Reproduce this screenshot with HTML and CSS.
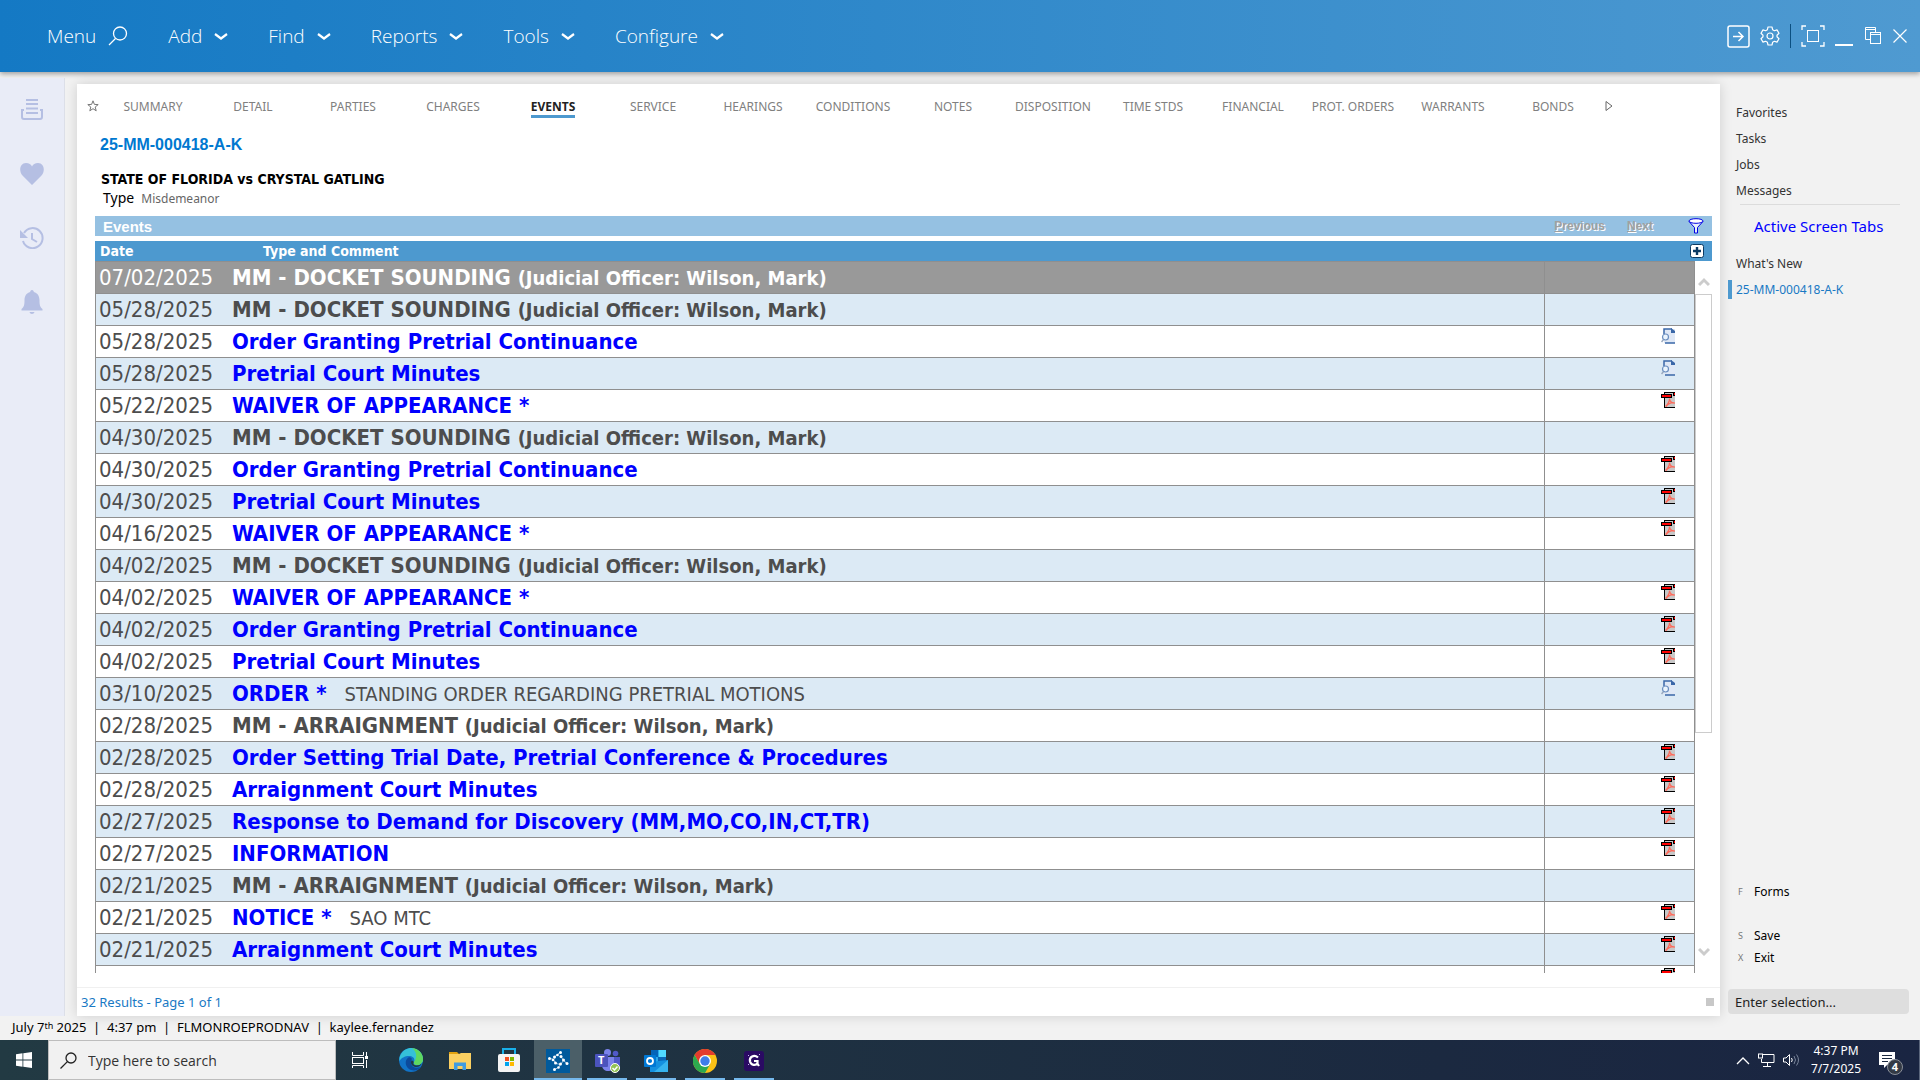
FILE: index.html
```html
<!DOCTYPE html>
<html lang="en">
  <head>
    <meta charset="UTF-8" />
    <meta name="viewport" content="width=device-width, initial-scale=1.0" />
    <title>25-MM-000418-A-K - Events</title>
    <link rel="stylesheet" href="styles.css" />
  </head>
  <body>
    <svg class="sprite" aria-hidden="true">
      <symbol id="chevron" viewBox="0 0 14 14">
        <path d="M1 5l6 4.500L13 5" fill="none" stroke="#fff" stroke-width="2.200" />
      </symbol>
      <symbol id="pdf" viewBox="0 0 14 16">
        <path d="M3 0h11v16H3z" fill="#000" />
        <path d="M4 1h10v14H4z" fill="#c8c8c8" />
        <path d="M12 0h2v4h-2z" fill="#000" />
        <path d="M13 1h1v2h-1z" fill="#f00" />
        <path d="M0 2h11v4H0z" fill="#000" />
        <path d="M1 3h9v2H1z" fill="#f00" />
        <path d="M4.500 14.500c2-2 4-5 4-8 .2 3 2.500 5 5.500 4.500-3-.8-6.500.5-9 3.500" fill="none" stroke="#ff6a5a" stroke-width="1.200" />
      </symbol>
      <symbol id="doc" viewBox="0 0 14 16">
        <path d="M3 1h11v14H3z" fill="#dfe8f6" />
        <path d="M3 6V1h8M4 15h10" fill="none" stroke="#3a67a8" stroke-width="1.500" />
        <path d="M10 0l4 3v2h-4z" fill="#3a67a8" />
        <path d="M2.500 11.500L.5 14" stroke="#9aa9c0" stroke-width="1.500" />
        <circle cx="4.500" cy="9" r="3" fill="#eaf4fd" stroke="#6c8fc0" stroke-width="1.200" />
      </symbol>
    </svg>

    <header class="topbar">
      <nav class="menu">
        <button>Menu
          <svg width="20" height="20" viewBox="0 0 20 20"><circle cx="12" cy="7.500" r="6.500" fill="none" stroke="#fff" stroke-width="1.300" /><path d="M7.500 12.500L1 19" stroke="#fff" stroke-width="1.300" /></svg>
        </button>
        <button>Add <svg width="14" height="14"><use href="#chevron" /></svg></button>
        <button>Find <svg width="14" height="14"><use href="#chevron" /></svg></button>
        <button>Reports <svg width="14" height="14"><use href="#chevron" /></svg></button>
        <button>Tools <svg width="14" height="14"><use href="#chevron" /></svg></button>
        <button>Configure <svg width="14" height="14"><use href="#chevron" /></svg></button>
      </nav>
      <div class="window-tools">
        <button aria-label="Sign out">
          <svg width="23" height="23" viewBox="0 0 23 23" fill="none" stroke="#fff"><rect x="1" y="1" width="21" height="21" rx="2" stroke-width="1.500" /><path d="M6 11.500h10M11.500 7l4.500 4.500-4.500 4.500" stroke-width="1.500" /></svg>
        </button>
        <button aria-label="Settings">
          <svg width="20" height="20" viewBox="0 0 20 20" fill="none" stroke="#fff" stroke-width="1.200" stroke-linejoin="round"><circle cx="10" cy="10" r="3" /><path d="M8 1h4l.6 2.700 1.800 1 2.600-.8 2 3.400-2 1.900v1.600l2 1.900-2 3.400-2.600-.8-1.800 1L12 19H8l-.6-2.700-1.800-1-2.600.8-2-3.400 2-1.900V9.200L1 7.300l2-3.400 2.600.8 1.800-1z" /></svg>
        </button>
        <span class="tool-divider"></span>
        <button aria-label="Full screen">
          <svg width="24" height="22" viewBox="0 0 24 22" fill="none" stroke="#fff"><path d="M1 5V1h4M19 1h4v4M23 17v4h-4M5 21H1v-4" stroke-width="1.300" /><rect x="6.500" y="5.500" width="11" height="11" /></svg>
        </button>
        <button aria-label="Minimize">
          <svg width="18" height="20" viewBox="0 0 18 20"><path d="M0 18h18v2H0z" fill="#fff" /></svg>
        </button>
        <button class="restore" aria-label="Restore">
          <svg width="16" height="18" viewBox="0 0 16 18" fill="none" stroke="#fff"><path d="M5 12.500H.5v-12h10v5M.5 2.500h10" /><rect x="5.500" y="5.500" width="10" height="11" /><path d="M5.500 7.500h10" /></svg>
        </button>
        <button aria-label="Close">
          <svg width="14" height="14" viewBox="0 0 14 14"><path d="M.5.5l13 13M13.500.5l-13 13" stroke="#fff" stroke-width="1.200" /></svg>
        </button>
      </div>
    </header>

    <div class="workspace">
      <aside class="rail">
        <button aria-label="Queue">
          <svg width="22" height="22" viewBox="0 0 22 22" fill="none" stroke="#b5bfe3" stroke-width="2"><path d="M5 1h12M5 5h12M5 9.500h12M5 14h12" /><path d="M3 11H1v7q0 2 2 2h16q2 0 2-2v-7h-2" /></svg>
        </button>
        <button aria-label="Favorites">
          <svg width="24" height="22" viewBox="0 0 24 22" fill="#b5bfe3"><path d="M12 22L2.500 12.500C-1.500 8-.2 0 6 0c3 0 5 1.500 6 3.500C13 1.500 15 0 18 0c6.200 0 7.500 8 3.500 12.500z" /></svg>
        </button>
        <button aria-label="History">
          <svg width="24" height="22" viewBox="0 0 24 22" fill="none" stroke="#b5bfe3" stroke-width="2"><path d="M4 6a10 10 0 1 1-1 8" /><path d="M0 3v8h8z" fill="#b5bfe3" stroke="none" /><path d="M12 6v6l5 3" /></svg>
        </button>
        <button aria-label="Notifications">
          <svg width="22" height="24" viewBox="0 0 22 24" fill="#b5bfe3"><path d="M11 0c1.300 0 1.800 1 1.800 2 4 1 5.700 4.500 5.700 8 0 5 .5 7 3 9v1.500H.5V19c2.500-2 3-4 3-9 0-3.500 1.700-7 5.700-8 0-1 .5-2 1.800-2zM8.500 22h5c-.5 2.500-4.500 2.500-5 0z" /></svg>
        </button>
      </aside>

      <main class="panel">
        <nav class="tabs">
          <svg class="star" width="12" height="12" viewBox="0 0 12 12"><path d="M6 .8l1.400 3.600 3.800.2-3 2.400 1 3.800L6 8.700l-3.200 2.100 1-3.800-3-2.400 3.800-.2z" fill="none" stroke="#777" /></svg>
          <a href="#">SUMMARY</a>
          <a href="#">DETAIL</a>
          <a href="#">PARTIES</a>
          <a href="#">CHARGES</a>
          <a href="#" class="active"><span>EVENTS</span></a>
          <a href="#">SERVICE</a>
          <a href="#">HEARINGS</a>
          <a href="#">CONDITIONS</a>
          <a href="#">NOTES</a>
          <a href="#">DISPOSITION</a>
          <a href="#">TIME STDS</a>
          <a href="#">FINANCIAL</a>
          <a href="#">PROT. ORDERS</a>
          <a href="#">WARRANTS</a>
          <a href="#">BONDS</a>
          <button aria-label="More tabs"><svg width="8" height="12" viewBox="0 0 8 12"><path d="M1 1.500v9L7 6z" fill="none" stroke="#666" /></svg></button>
        </nav>

        <section class="case">
          <h1>25-MM-000418-A-K</h1>
          <h2>STATE OF FLORIDA vs CRYSTAL GATLING</h2>
          <p><span>Type</span> Misdemeanor</p>
        </section>

        <section class="events">
          <div class="events-bar">
            <h3>Events</h3>
            <button class="page-btn" disabled><u>P</u>revious</button>
            <button class="page-btn" disabled><u>N</u>ext</button>
            <button aria-label="Filter">
              <svg width="16" height="16" viewBox="0 0 16 16" fill="none" stroke="#0000e6"><path d="M1 3.500l5.500 6V15h3V9.500l5.500-6" fill="#e8f1fa" /><ellipse cx="8" cy="3" rx="7" ry="2.300" fill="#fff" /></svg>
            </button>
          </div>
          <div class="grid">
            <table>
              <thead>
                <tr>
                  <th class="date">Date</th>
                  <th class="type">Type and Comment</th>
                  <th class="flag"></th>
                  <th class="add"><button aria-label="Add event"><svg width="14" height="14" viewBox="0 0 14 14"><rect x=".5" y=".5" width="13" height="13" rx="2" fill="#fff" stroke="#0b3a63" /><path d="M7 3v8M3 7h8" stroke="#0b3a63" stroke-width="2.400" /></svg></button></th>
                </tr>
              </thead>
              <tbody>
                <tr class="selected"><td>07/02/2025</td><td><b>MM - DOCKET SOUNDING <small>(Judicial Officer: Wilson, Mark)</small></b></td><td></td></tr>
                <tr><td>05/28/2025</td><td><b>MM - DOCKET SOUNDING <small>(Judicial Officer: Wilson, Mark)</small></b></td><td></td></tr>
                <tr><td>05/28/2025</td><td><a href="#">Order Granting Pretrial Continuance</a></td><td><svg><use href="#doc" /></svg></td></tr>
                <tr><td>05/28/2025</td><td><a href="#">Pretrial Court Minutes</a></td><td><svg><use href="#doc" /></svg></td></tr>
                <tr><td>05/22/2025</td><td><a href="#">WAIVER OF APPEARANCE *</a></td><td><svg><use href="#pdf" /></svg></td></tr>
                <tr><td>04/30/2025</td><td><b>MM - DOCKET SOUNDING <small>(Judicial Officer: Wilson, Mark)</small></b></td><td></td></tr>
                <tr><td>04/30/2025</td><td><a href="#">Order Granting Pretrial Continuance</a></td><td><svg><use href="#pdf" /></svg></td></tr>
                <tr><td>04/30/2025</td><td><a href="#">Pretrial Court Minutes</a></td><td><svg><use href="#pdf" /></svg></td></tr>
                <tr><td>04/16/2025</td><td><a href="#">WAIVER OF APPEARANCE *</a></td><td><svg><use href="#pdf" /></svg></td></tr>
                <tr><td>04/02/2025</td><td><b>MM - DOCKET SOUNDING <small>(Judicial Officer: Wilson, Mark)</small></b></td><td></td></tr>
                <tr><td>04/02/2025</td><td><a href="#">WAIVER OF APPEARANCE *</a></td><td><svg><use href="#pdf" /></svg></td></tr>
                <tr><td>04/02/2025</td><td><a href="#">Order Granting Pretrial Continuance</a></td><td><svg><use href="#pdf" /></svg></td></tr>
                <tr><td>04/02/2025</td><td><a href="#">Pretrial Court Minutes</a></td><td><svg><use href="#pdf" /></svg></td></tr>
                <tr><td>03/10/2025</td><td><a href="#">ORDER *</a><span class="comment">STANDING ORDER REGARDING PRETRIAL MOTIONS</span></td><td><svg><use href="#doc" /></svg></td></tr>
                <tr><td>02/28/2025</td><td><b>MM - ARRAIGNMENT <small>(Judicial Officer: Wilson, Mark)</small></b></td><td></td></tr>
                <tr><td>02/28/2025</td><td><a href="#">Order Setting Trial Date, Pretrial Conference &amp; Procedures</a></td><td><svg><use href="#pdf" /></svg></td></tr>
                <tr><td>02/28/2025</td><td><a href="#">Arraignment Court Minutes</a></td><td><svg><use href="#pdf" /></svg></td></tr>
                <tr><td>02/27/2025</td><td><a href="#">Response to Demand for Discovery (MM,MO,CO,IN,CT,TR)</a></td><td><svg><use href="#pdf" /></svg></td></tr>
                <tr><td>02/27/2025</td><td><a href="#">INFORMATION</a></td><td><svg><use href="#pdf" /></svg></td></tr>
                <tr><td>02/21/2025</td><td><b>MM - ARRAIGNMENT <small>(Judicial Officer: Wilson, Mark)</small></b></td><td></td></tr>
                <tr><td>02/21/2025</td><td><a href="#">NOTICE *</a><span class="comment">SAO MTC</span></td><td><svg><use href="#pdf" /></svg></td></tr>
                <tr><td>02/21/2025</td><td><a href="#">Arraignment Court Minutes</a></td><td><svg><use href="#pdf" /></svg></td></tr>
                <tr><td></td><td></td><td><svg><use href="#pdf" /></svg></td></tr>
              </tbody>
            </table>
            <div class="scrollbar">
              <svg width="12" height="10" viewBox="0 0 12 10"><path d="M1 8l5-5 5 5" fill="none" stroke="#ccc" stroke-width="3" /></svg>
              <div class="track"><div class="thumb"></div></div>
              <svg width="12" height="10" viewBox="0 0 12 10"><path d="M1 2l5 5 5-5" fill="none" stroke="#ccc" stroke-width="3" /></svg>
            </div>
          </div>
        </section>

        <footer class="results">
          <span>32 Results - Page 1 of 1</span>
          <i class="grip"></i>
        </footer>
      </main>

      <aside class="sidebar">
        <nav class="links">
          <a href="#">Favorites</a>
          <a href="#">Tasks</a>
          <a href="#">Jobs</a>
          <a href="#">Messages</a>
        </nav>
        <h4>Active Screen Tabs</h4>
        <nav class="links">
          <a href="#">What's New</a>
          <a href="#" class="current">25-MM-000418-A-K</a>
        </nav>
        <div class="actions">
          <button class="forms"><kbd>F</kbd>Forms</button>
          <button><kbd>S</kbd>Save</button>
          <button><kbd>X</kbd>Exit</button>
        </div>
        <input class="selection" type="text" placeholder="Enter selection..." aria-label="Enter selection" />
      </aside>
    </div>

    <div class="status">July 7<sup>th</sup> 2025 &nbsp;|&nbsp; 4:37 pm &nbsp;|&nbsp; FLMONROEPRODNAV &nbsp;|&nbsp; kaylee.fernandez</div>

    <footer class="taskbar">
      <button class="start" aria-label="Start">
        <svg width="16" height="16" viewBox="0 0 16 16" fill="#fff"><path d="M0 2.200l6.500-.9v6.300H0zM7.300 1.200L16 0v7.600H7.300zM0 8.400h6.500v6.300L0 13.800zM7.300 8.400H16V16l-8.700-1.200z" /></svg>
      </button>
      <label class="search">
        <svg width="17" height="17" viewBox="0 0 17 17" fill="none" stroke="#222" stroke-width="1.300"><circle cx="11" cy="6" r="5" /><path d="M7.400 9.600L.5 16.500" /></svg>
        <input type="text" placeholder="Type here to search" aria-label="Type here to search" />
      </label>
      <div class="apps">
        <button class="task-view" aria-label="Task view">
          <svg width="17" height="16" viewBox="0 0 17 16" fill="none" stroke="#fff"><path d="M.5 0v3.500h11V0M.5 16v-2.500h11V16M14.500 0v4M14.500 8v8" /><rect x=".5" y="5.500" width="11" height="6" /><path d="M13 4h3v3h-3z" fill="#fff" stroke="none" /></svg>
        </button>
        <button aria-label="Edge">
          <svg width="24" height="24" viewBox="0 0 24 24"><circle cx="12" cy="12" r="12" fill="#1173c7" /><path d="M1 8C4 1 10-.5 14 .2 20 1 24 6 24 11c0 4-3 6-6 6-3 0-4-1.500-3-3 1.500-3-1-6-5-6-4 0-8 2-9.500 5C.3 11 .4 9.500 1 8z" fill="#35c1d8" /><path d="M13 .1C20 .8 24 6 24 11c0 4-3 6-6 6-3 0-4-1.500-3-3 4-5 2-11-2-13.900z" fill="#5fd860" /><path d="M9.500 9.500C5 12 6 20 12 22c4 1.300 8-.5 10-3-5 2-10 0-10-4.500 0-1.500.5-3 1-3.500-1-1.500-2.500-2-3.500-1.500z" fill="#0c4a9b" /><path d="M12.500 12.500c2 0 2.500 1.500 2 2.500-.7 1.500 1 2.500 3 2.500 2.500 0 4-1 5-2-.5 3-4 4-7 3.200-2.500-.7-4.500-3.500-3-6.200z" fill="#223a43" /></svg>
        </button>
        <button aria-label="File Explorer">
          <svg width="22" height="19" viewBox="0 0 22 19"><path d="M0 1h8l2 2H0z" fill="#e2a20f" /><path d="M0 3h10l2-1h10v16H0z" fill="#fbd061" /><path d="M5 11.500h12V19h-3.500v-4h-5v4H5z" fill="#3f9be0" /></svg>
        </button>
        <button aria-label="Store">
          <svg width="24" height="24" viewBox="0 0 24 24"><path d="M6 7V1h12v6" fill="none" stroke="#19b0ea" stroke-width="2" /><rect x="1" y="6" width="22" height="18" rx="2" fill="#f4f4f4" /><path d="M8 9h4v4H8z" fill="#f25022" /><path d="M13 9h4v4h-4z" fill="#7fba00" /><path d="M8 14h4v4H8z" fill="#00a4ef" /><path d="M13 14h4v4h-4z" fill="#ffb900" /></svg>
        </button>
        <button class="running focused" aria-label="Case manager">
          <svg width="24" height="24" viewBox="0 0 24 24"><path d="M0 0h24v24H0z" fill="#005a9c" /><path d="M14 3.500l-5 4-1.500 3.500M3 9.500l4 .5 3 4.500 4.500 1 3-4-2.500-4M17.500 11.500l3.500 3M14.500 15.500l-2 3-4 2" fill="none" stroke="#9cc4e2" /><g fill="#fff"><circle cx="14.500" cy="3.500" r="1.500" /><circle cx="11.500" cy="6" r="1.300" /><circle cx="8.500" cy="8" r="1.500" /><circle cx="3.500" cy="9.500" r="1.500" /><circle cx="7" cy="11" r="1.300" /><circle cx="9.500" cy="14" r="1.500" /><circle cx="15" cy="7.500" r="1.500" /><circle cx="17.500" cy="11" r="1.500" /><circle cx="14.500" cy="15" r="1.500" /><circle cx="21" cy="14.500" r="1.500" /><circle cx="12.500" cy="18.500" r="1.300" /><circle cx="8.500" cy="20.500" r="1.500" /></g></svg>
        </button>
        <button class="running" aria-label="Teams">
          <svg width="25" height="24" viewBox="0 0 25 24"><circle cx="20.500" cy="4.500" r="2.800" fill="#5059c9" /><circle cx="12.500" cy="3.500" r="3.500" fill="#7b83eb" /><path d="M17 8h8v8c0 3-3 5-6 4z" fill="#5059c9" /><path d="M7 8h12v8c0 8-12 8-12 0z" fill="#7b83eb" /><rect y="5" width="13" height="13" rx="1" fill="#4b53bc" /><text x="3" y="15" class="glyph">T</text><circle cx="20" cy="19" r="4.500" fill="#92c353" stroke="#fff" /><path d="M17.500 19l2 2 3-3.500" fill="none" stroke="#fff" stroke-width="1.500" /></svg>
        </button>
        <button class="running" aria-label="Outlook">
          <svg width="24" height="22" viewBox="0 0 24 22"><path d="M7 0h15v14H7z" fill="#28a8ea" /><path d="M7 0h7v7H7z" fill="#0364b8" /><path d="M14 7h8v6h-8z" fill="#0a67b7" /><path d="M15 0h7v7h-7z" fill="#50d9ff" /><path d="M6 12l18-2v12H6z" fill="#1490df" /><path d="M24 10L10 22h14z" fill="#36b3ee" /><rect y="5" width="12" height="12" rx="1" fill="#0078d4" /><circle cx="6" cy="11" r="3" fill="none" stroke="#fff" stroke-width="1.800" /></svg>
        </button>
        <button class="running" aria-label="Chrome">
          <svg width="24" height="24" viewBox="0 0 24 24"><circle cx="12" cy="12" r="12" fill="#fbc116" /><path d="M12 6h10.400a12 12 0 0 0-20.800 0l5.200 9z" fill="#e33b2e" /><path d="M1.600 6a12 12 0 0 0 10.400 18l5.200-9H6.800z" fill="#2da94f" /><circle cx="12" cy="12" r="6" fill="#fff" /><circle cx="12" cy="12" r="4.700" fill="#3f7de8" /></svg>
        </button>
        <button class="running" aria-label="Assistant">
          <svg width="20" height="20" viewBox="0 0 20 20"><rect width="20" height="20" rx="3" fill="#2a0a63" /><path d="M14 6.500C10 3 5 6 6 10.500c1 4 6 4.500 7.500 1.500v-2H10M13 12l2 3" fill="none" stroke="#fff" stroke-width="2.200" /><path d="M4 4l1 1M4 14l1-1M15 4l1-1" stroke="#c9b6f0" /></svg>
        </button>
      </div>
      <div class="tray">
        <svg width="14" height="9" viewBox="0 0 14 9"><path d="M1 8l6-6 6 6" fill="none" stroke="#fff" stroke-width="1.300" /></svg>
        <svg width="17" height="14" viewBox="0 0 17 14" fill="none" stroke="#fff"><path d="M5 1.500h11v8H3.500V6M9.500 9.500v4M5 13.500h8" /><rect x=".5" y="1" width="4" height="4" /></svg>
        <svg width="17" height="14" viewBox="0 0 17 14" fill="none" stroke="#fff"><path d="M.5 5h2.500L6.500 1.500v11L3 9H.5z" /><path d="M8.500 5q1.500 2 0 4" /><path d="M11 3q3 4 0 8M13.500 1.500q4 5.500 0 11" stroke="#78849a" /></svg>
      </div>
      <div class="clock">4:37 PM<br />7/7/2025</div>
      <button class="notices" aria-label="Notifications">
        <svg width="16" height="17" viewBox="0 0 16 17"><path d="M0 0h16v13H8l-3 3v-3H0z" fill="#fff" /><path d="M3 3.500h10M3 6.500h10M3 9.500h6" stroke="#1b2940" /></svg>
        <span class="badge">4</span>
      </button>
    </footer>
  </body>
</html>
```
FILE: styles.css
```css
* {
  box-sizing: border-box;
}
body {
  margin: 0;
  height: 100vh;
  display: flex;
  flex-direction: column;
  overflow: hidden;
  background-color: #f2f2f2;
  color: #000;
  font-family: "Noto Sans", "Open Sans", sans-serif;
  font-size: 12px;
}
h1,
h2,
h3,
h4,
p {
  margin: 0;
}
a {
  text-decoration: none;
  color: inherit;
}
button {
  display: flex;
  align-items: center;
  padding: 0;
  border: 0;
  background: none;
  color: inherit;
  font: inherit;
}
.sprite {
  display: none;
}

/* top bar */
.topbar {
  flex: none;
  display: flex;
  align-items: center;
  justify-content: space-between;
  height: 72px;
  padding: 0 13px 0 47px;
  background: linear-gradient(to right, #1479c4, #4f9ad1);
  box-shadow: 0 2px 5px rgba(0, 0, 0, 0.35);
  color: #fff;
}
.menu {
  display: flex;
  gap: 40px;
  font-family: "Open Sans", sans-serif;
  font-size: 19px;
  font-weight: 300;
}
.menu button {
  gap: 12px;
}
.window-tools {
  display: flex;
  align-items: center;
  gap: 10px;
}
.tool-divider {
  width: 1px;
  height: 24px;
  background-color: #0b4f80;
}
.restore {
  margin: 0 2px;
}

.workspace {
  flex: 1;
  min-height: 0;
  display: flex;
}

/* icon rail */
.rail {
  flex: none;
  display: flex;
  flex-direction: column;
  align-items: center;
  gap: 40px;
  width: 65px;
  margin-top: 6px;
  padding-top: 20px;
  background-color: #e9ecf7;
  border-right: 1px solid #dcdfe8;
}
.rail button {
  height: 24px;
}

/* main panel */
.panel {
  flex: 1;
  min-width: 0;
  display: flex;
  flex-direction: column;
  margin: 12px 0 0 12px;
  background-color: #fff;
  box-shadow: 0 0 12px rgba(0, 0, 0, 0.15);
}
.tabs {
  display: flex;
  align-items: center;
  height: 44px;
  padding-left: 10px;
  color: #808080;
}
.star {
  margin-right: 4px;
}
.tabs a {
  width: 100px;
  text-align: center;
}
.tabs .active {
  color: #222;
  font-weight: bold;
}
.tabs .active span {
  border-bottom: 3px solid #4d99cf;
}
.tabs button {
  margin-left: 2px;
}
.case {
  padding: 7px 23px 0;
}
.case h1 {
  margin-bottom: 15px;
  color: #0078d0;
  font: bold 16px/20px "Liberation Sans", Arial, sans-serif;
}
.case h2 {
  padding-left: 1px;
  font: bold 14px/18px "DejaVu Sans Condensed", Tahoma, sans-serif;
}
.case p {
  padding-left: 3px;
  line-height: 20px;
  color: #666;
}
.case p span {
  margin-right: 4px;
  color: #000;
  font-size: 14px;
}

/* events grid */
.events {
  flex: 1;
  min-height: 0;
  display: flex;
  flex-direction: column;
  margin: 7px 8px 14px 18px;
}
.events-bar {
  flex: none;
  display: flex;
  align-items: center;
  height: 20px;
  margin-bottom: 5px;
  padding: 0 8px;
  background-color: #95c1e2;
  font-family: "Liberation Sans", Arial, sans-serif;
}
.events-bar h3 {
  flex: 1;
  color: #fff;
  font-size: 15px;
}
.page-btn {
  margin-right: 22px;
  color: #a0a0a0;
  font-size: 12px;
  font-weight: bold;
  text-shadow: 1px 1px #fff;
}
.page-btn + .page-btn {
  margin-right: 35px;
}
.grid {
  position: relative;
  flex: 1;
  min-height: 0;
  overflow: hidden;
}
.grid table {
  width: 100%;
  table-layout: fixed;
  border-collapse: separate;
  border-spacing: 0;
}
.grid th {
  height: 20px;
  padding: 0 5px;
  background-color: #4d99cf;
  color: #fff;
  font: bold 14px/18px "DejaVu Sans Condensed", Tahoma, sans-serif;
  text-align: left;
}
.grid .date {
  width: 133px;
}
.grid .type {
  padding-left: 35px;
}
.grid .flag {
  width: 151px;
}
.grid .add {
  width: 17px;
  padding: 0;
}
.add button {
  margin-left: -5px;
}
.grid td {
  height: 32px;
  padding: 0 4px;
  border-bottom: 1px solid #8f8f8f;
  color: #4d4d4d;
  font: 22px/30px "DejaVu Sans Condensed", Tahoma, sans-serif;
  white-space: nowrap;
}
.grid td:first-child {
  border-left: 1px solid #8f8f8f;
  padding-left: 3px;
}
.grid td:nth-child(3) {
  border-left: 1px solid #8f8f8f;
  border-right: 1px solid #8f8f8f;
  padding: 2px 19px 0;
  vertical-align: top;
}
.grid td svg {
  display: block;
  width: 14px;
  height: 16px;
  margin-left: auto;
}
.grid tbody tr:nth-child(even) {
  background-color: #dceaf5;
}
.grid .selected {
  background-color: #999;
}
.grid .selected td {
  height: 33px;
  border-top: 1px solid #8f8f8f;
  color: #fff;
}
.grid small {
  font-size: 20px;
}
.grid td a {
  color: #00f;
  font-weight: bold;
}
.comment {
  margin-left: 18px;
  font-size: 20px;
}
.scrollbar {
  position: absolute;
  top: 20px;
  right: 0;
  bottom: 0;
  width: 17px;
  display: flex;
  flex-direction: column;
  align-items: center;
  padding: 16px 0;
}
.track {
  flex: 1;
  width: 100%;
  padding: 7px 0;
}
.thumb {
  height: 68%;
  border: 1px solid #ccc;
}
.results {
  flex: none;
  display: flex;
  align-items: center;
  justify-content: space-between;
  height: 29px;
  padding: 0 6px 0 4px;
  border-top: 1px solid #f0f0f0;
  color: #1979c4;
  font-size: 13px;
}
.grip {
  width: 8px;
  height: 8px;
  background-color: #c8c8c8;
}

/* right sidebar */
.sidebar {
  flex: none;
  display: flex;
  flex-direction: column;
  width: 200px;
  padding: 31px 11px 2px 8px;
  color: #333;
}
.links {
  display: flex;
  flex-direction: column;
  gap: 7px;
  line-height: 19px;
}
.links a {
  padding-left: 4px;
  border-left: 4px solid transparent;
}
.links .current {
  border-color: #4d99cf;
  color: #1979c4;
}
.sidebar h4 {
  margin: 4px 9px 17px 12px;
  padding: 10px 0 0 14px;
  border-top: 1px solid #dcdcdc;
  color: #00f;
  font-size: 15px;
  font-weight: normal;
  line-height: 22px;
}
.actions {
  display: flex;
  flex-direction: column;
  margin-top: auto;
  color: #000;
}
.actions button {
  height: 22px;
  padding-left: 10px;
}
.actions .forms {
  margin-bottom: 22px;
}
.actions kbd {
  width: 16px;
  color: #777;
  font-family: inherit;
  font-size: 9px;
  text-align: left;
}
.selection {
  height: 25px;
  margin-top: 21px;
  padding: 0 7px;
  border: 0;
  border-radius: 4px;
  background-color: #dedede;
  font: 13px "Noto Sans", "Open Sans", sans-serif;
}
.selection::placeholder {
  color: #222;
}

.status {
  flex: none;
  height: 24px;
  padding-left: 12px;
  font-size: 13px;
  line-height: 22px;
}
.status sup {
  font-size: 9px;
  line-height: 0;
  vertical-align: 3px;
}

/* taskbar */
.taskbar {
  flex: none;
  display: flex;
  align-items: stretch;
  height: 40px;
  background: linear-gradient(to right, #223a43, #1b2940 75%, #1a2542);
  color: #fff;
}
.start {
  justify-content: center;
  width: 48px;
}
.search {
  display: flex;
  align-items: center;
  gap: 11px;
  width: 288px;
  padding-left: 11px;
  background-color: #f1f1f1;
  border: 1px solid #bdbdbd;
}
.search input {
  flex: 1;
  min-width: 0;
  padding: 0;
  border: 0;
  background: none;
  font: 14px "Open Sans", sans-serif;
}
.search input::placeholder {
  color: #333;
}
.apps {
  display: flex;
  gap: 1px;
}
.apps button {
  justify-content: center;
  width: 48px;
}
.apps .task-view {
  margin-right: 2px;
}
/* underline is inset a little, the focused app gets the full width */
.apps .running {
  padding-top: 2px;
  background: linear-gradient(#76b9ed, #76b9ed) center bottom / 40px 2px no-repeat;
}
.apps .focused {
  background-color: #4b5f68;
  background-size: 48px 2px;
}
.glyph {
  fill: #fff;
  font: bold 11px "Open Sans", sans-serif;
}
.tray {
  display: flex;
  align-items: center;
  gap: 8px;
  margin-left: auto;
}
.clock {
  width: 72px;
  margin-right: 7px;
  padding-top: 2px;
  line-height: 18px;
  text-align: center;
}
.notices {
  position: relative;
  width: 41px;
  border-right: 1px solid #5b667c;
}
.badge {
  position: absolute;
  left: 8px;
  top: 19px;
  width: 16px;
  height: 16px;
  border: 1px solid #8a8f99;
  border-radius: 8px;
  background-color: #333a45;
  font-size: 11px;
  font-weight: bold;
  line-height: 14px;
}
```
